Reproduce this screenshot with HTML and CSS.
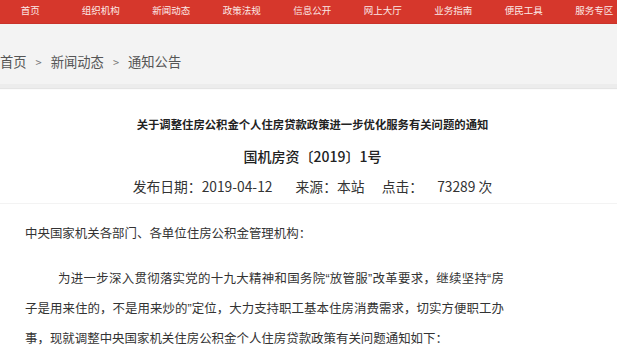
FILE: index.html
```html
<!DOCTYPE html>
<html lang="zh-CN">
<head>
    <meta charset="UTF-8">
    <meta name="viewport" content="width=device-width, initial-scale=1.0">
    <title>通知公告</title>
    <link rel="stylesheet" href="styles.css">
</head>
<body>
<nav class="topnav">
    <a href="#">首页</a>
    <a href="#">组织机构</a>
    <a href="#">新闻动态</a>
    <a href="#">政策法规</a>
    <a href="#">信息公开</a>
    <a href="#">网上大厅</a>
    <a href="#">业务指南</a>
    <a href="#">便民工具</a>
    <a href="#">服务专区</a>
</nav>
<div class="crumbs">
    <a href="#">首页</a><span class="sep">&gt;</span><a href="#">新闻动态</a><span class="sep">&gt;</span><a href="#">通知公告</a>
</div>
<div class="notice">
    <div class="notice-head">
        <h1>关于调整住房公积金个人住房贷款政策进一步优化服务有关问题的通知</h1>
        <p class="doc-no">国机房资〔2019〕1号</p>
        <p class="meta">
            <span>发布日期：2019-04-12</span>
            <span class="source">来源：本站</span>
            <span class="hits">点击：</span>
            <span class="count">73289 次</span>
        </p>
    </div>
    <div class="notice-body">
        <p class="salute">中央国家机关各部门、各单位住房公积金管理机构：</p>
        <p class="para">为进一步深入贯彻落实党的十九大精神和国务院“放管服”改革要求，继续坚持“房子是用来住的，不是用来炒的”定位，大力支持职工基本住房消费需求，切实方便职工办事，现就调整中央国家机关住房公积金个人住房贷款政策有关问题通知如下：</p>
    </div>
</div>
</body>
</html>
```

FILE: styles.css
```css
body {
    margin: 0;
    font-family: "Noto Sans CJK SC", "Noto Sans", sans-serif;
    background-color: #fff;
    color: #333;
    overflow: hidden;
}

a {
    color: inherit;
    text-decoration: none;
}

.topnav {
    display: flex;
    height: 23px;
    margin-left: -5px;
    background-color: #d6372c;
    border-bottom: 1px solid #c9332a;
}

.topnav a {
    flex: 0 0 70.5px;
    text-align: center;
    color: #fbe9e7;
    font-size: 9.5px;
    line-height: 21px;
}

.crumbs {
    height: 60px;
    background-color: #f3f3f3;
    border-bottom: 4px solid #ececec;
    box-shadow: 0 1px 1px #e4e4e4;
    color: #555;
    font-size: 13.3px;
    line-height: 76px;
    white-space: nowrap;
}

.crumbs .sep {
    margin: 0 9px;
    font-size: 11px;
    color: #777;
}

.notice-head {
    padding: 26px 0 7px 8px;
    border-bottom: 1px solid #f3f3f3;
    text-align: center;
}

.notice-head h1 {
    margin: 0;
    font-size: 11.35px;
    font-weight: bold;
    color: #222;
    line-height: 20px;
}

.doc-no {
    margin: 12px 0 0;
    font-size: 14px;
    font-weight: 500;
    color: #222;
    line-height: 20px;
}

.meta {
    margin: 10px 0 0;
    font-size: 13.8px;
    color: #333;
    line-height: 20px;
}

.meta .source {
    margin-left: 20px;
}

.meta .hits {
    margin-left: 14px;
}

.meta .count {
    margin-left: 11px;
}

.notice-body {
    width: 479px;
    padding-left: 25px;
    font-family: "Liberation Sans", "Noto Sans CJK SC", sans-serif;
    font-size: 12.45px;
    color: #333;
}

.salute {
    margin: 18px 0 0;
    line-height: 24px;
}

.para {
    margin: 18px 0 0;
    text-indent: 33px;
    line-height: 30px;
    text-align: justify;
}
```
